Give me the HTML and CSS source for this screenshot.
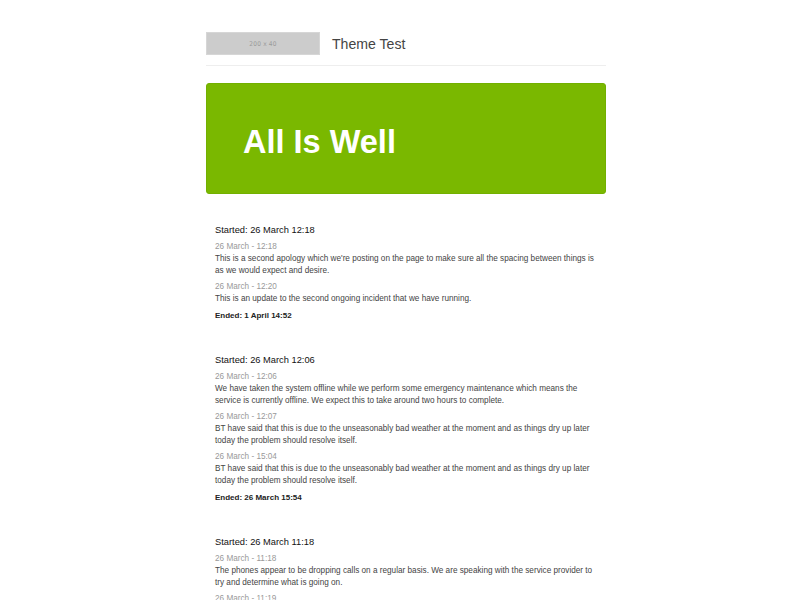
FILE: index.html
```html
<!DOCTYPE html>
<html>
<head>
<meta charset="utf-8">
<title>Theme Test</title>
<link rel="stylesheet" href="styles.css">
</head>
<body>
<div class="page">
  <header class="header">
    <div class="logo">200 x 40</div>
    <h1 class="site-title">Theme Test</h1>
  </header>

  <section class="status">
    <h2 class="status-text">All Is Well</h2>
  </section>

  <div class="incidents">
    <article class="incident">
      <h3 class="incident-title">Started: 26 March 12:18</h3>
      <div class="update">
        <div class="update-date">26 March - 12:18</div>
        <p class="update-body">This is a second apology which we're posting on the page to make sure all the spacing between things is as we would expect and desire.</p>
      </div>
      <div class="update">
        <div class="update-date">26 March - 12:20</div>
        <p class="update-body">This is an update to the second ongoing incident that we have running.</p>
      </div>
      <div class="ended">Ended: 1 April 14:52</div>
    </article>

    <article class="incident">
      <h3 class="incident-title">Started: 26 March 12:06</h3>
      <div class="update">
        <div class="update-date">26 March - 12:06</div>
        <p class="update-body">We have taken the system offline while we perform some emergency maintenance which means the service is currently offline. We expect this to take around two hours to complete.</p>
      </div>
      <div class="update">
        <div class="update-date">26 March - 12:07</div>
        <p class="update-body">BT have said that this is due to the unseasonably bad weather at the moment and as things dry up later today the problem should resolve itself.</p>
      </div>
      <div class="update">
        <div class="update-date">26 March - 15:04</div>
        <p class="update-body">BT have said that this is due to the unseasonably bad weather at the moment and as things dry up later today the problem should resolve itself.</p>
      </div>
      <div class="ended">Ended: 26 March 15:54</div>
    </article>

    <article class="incident">
      <h3 class="incident-title">Started: 26 March 11:18</h3>
      <div class="update">
        <div class="update-date">26 March - 11:18</div>
        <p class="update-body">The phones appear to be dropping calls on a regular basis. We are speaking with the service provider to try and determine what is going on.</p>
      </div>
      <div class="update">
        <div class="update-date">26 March - 11:19</div>
        <p class="update-body">We are continuing to look into the problem with the phones and will post another update shortly.</p>
      </div>
      <div class="ended">Ended: 26 March 12:30</div>
    </article>
  </div>
</div>
</body>
</html>
```

FILE: styles.css
```css
html, body {
  margin: 0;
  padding: 0;
  background: #fff;
}

body {
  font-family: "Liberation Sans", Arial, Helvetica, sans-serif;
  color: #333;
}

.page {
  width: 400px;
  margin: 0 auto;
  padding: 32px 0 0 12px;
}

.header {
  display: flex;
  align-items: center;
  gap: 12px;
  padding-bottom: 10px;
  border-bottom: 1px solid #eeeeee;
}

.logo {
  width: 114px;
  height: 23px;
  box-sizing: border-box;
  background: #cccccc;
  border: 1px solid #d6d6d6;
  color: #9a9a9a;
  font-family: "DejaVu Sans Condensed", "DejaVu Sans", sans-serif;
  font-size: 6.5px;
  letter-spacing: 0.2px;
  display: flex;
  align-items: center;
  justify-content: center;
}

.site-title {
  margin: 0;
  font-size: 14.1px;
  font-weight: normal;
  color: #444;
  line-height: 16px;
}

.status {
  margin-top: 17px;
  height: 111px;
  box-sizing: border-box;
  background: #7ab800;
  border: 1px solid #72b000;
  border-radius: 3px;
  padding: 6px 0 0 36px;
  display: flex;
  align-items: center;
}

.status-text {
  margin: 0;
  color: #fff;
  font-size: 32.5px;
  font-weight: bold;
  line-height: 40px;
}

.incidents {
  padding: 30px 9px 0 9px;
}

.incident {
  margin-bottom: 32px;
}

.incident-title {
  margin: 0 0 5px;
  font-size: 9.3px;
  line-height: 12px;
  font-weight: normal;
  color: #111;
}

.update {
  margin-bottom: 4px;
}

.update-date {
  font-size: 8.2px;
  line-height: 12px;
  color: #999;
}

.update-body {
  margin: 0;
  font-size: 8.2px;
  line-height: 12px;
  color: #444;
}

.ended {
  margin-top: 5px;
  font-size: 8px;
  line-height: 12px;
  font-weight: bold;
  color: #222;
}
```
